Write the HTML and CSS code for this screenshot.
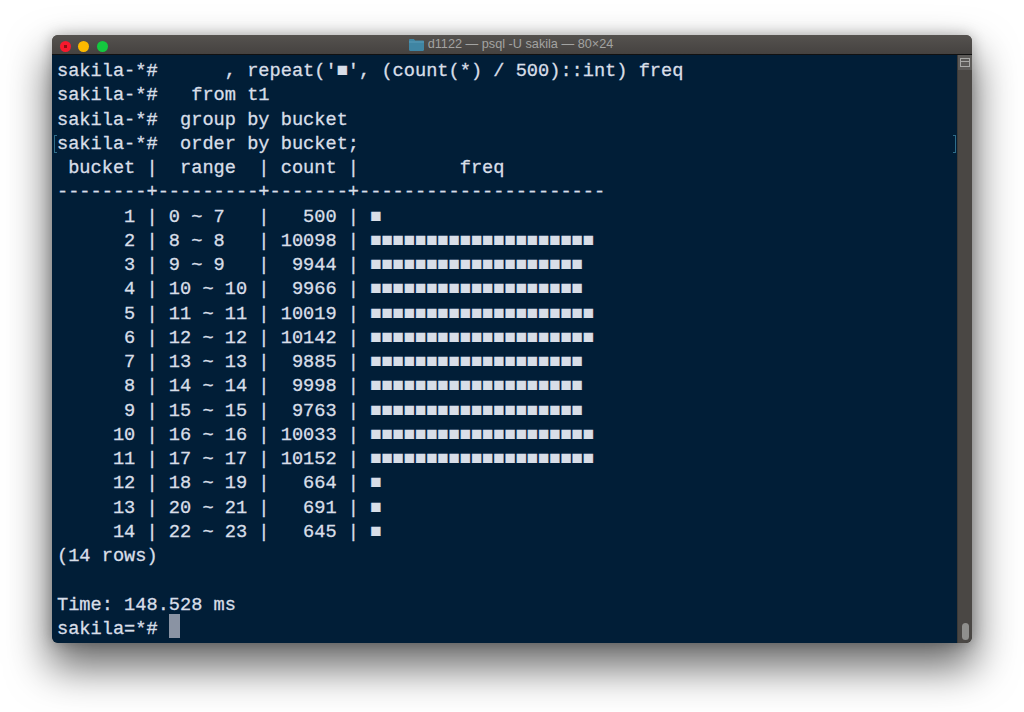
FILE: index.html
```html
<!DOCTYPE html>
<html lang="en">
<head>
<meta charset="utf-8">
<title>d1122 — psql -U sakila — 80×24</title>
<link rel="stylesheet" href="styles.css">
</head>
<body>
<main class="window">
  <header class="titlebar">
    <div class="lights">
      <span class="light red"></span>
      <span class="light yellow"></span>
      <span class="light green"></span>
    </div>
    <div class="title">
      <svg class="folder" viewBox="0 0 15 12" width="15" height="12" aria-hidden="true"><path d="M0 1.2C0 .5.5 0 1.2 0h3.6l1.4 1.4h7.6c.7 0 1.2.5 1.2 1.2v8.2c0 .7-.5 1.2-1.2 1.2H1.2C.5 12 0 11.500 0 10.800z" fill="#3f85a3"/><path d="M0 2.400h15v1H0z" fill="#5a9cb8"/></svg>
      <span>d1122 — psql -U sakila — 80×24</span>
    </div>
  </header>
  <div class="body">
    <div class="terminal">
<div class="line">sakila-*#      , repeat('■', (count(*) / 500)::int) freq</div>
<div class="line">sakila-*#   from t1</div>
<div class="line">sakila-*#  group by bucket</div>
<div class="line marked">sakila-*#  order by bucket;</div>
<div class="line"> bucket |  range  | count |         freq</div>
<div class="line">--------+---------+-------+----------------------</div>
<div class="line">      1 | 0 ~ 7   |   500 | ■</div>
<div class="line">      2 | 8 ~ 8   | 10098 | ■■■■■■■■■■■■■■■■■■■■</div>
<div class="line">      3 | 9 ~ 9   |  9944 | ■■■■■■■■■■■■■■■■■■■</div>
<div class="line">      4 | 10 ~ 10 |  9966 | ■■■■■■■■■■■■■■■■■■■</div>
<div class="line">      5 | 11 ~ 11 | 10019 | ■■■■■■■■■■■■■■■■■■■■</div>
<div class="line">      6 | 12 ~ 12 | 10142 | ■■■■■■■■■■■■■■■■■■■■</div>
<div class="line">      7 | 13 ~ 13 |  9885 | ■■■■■■■■■■■■■■■■■■■</div>
<div class="line">      8 | 14 ~ 14 |  9998 | ■■■■■■■■■■■■■■■■■■■</div>
<div class="line">      9 | 15 ~ 15 |  9763 | ■■■■■■■■■■■■■■■■■■■</div>
<div class="line">     10 | 16 ~ 16 | 10033 | ■■■■■■■■■■■■■■■■■■■■</div>
<div class="line">     11 | 17 ~ 17 | 10152 | ■■■■■■■■■■■■■■■■■■■■</div>
<div class="line">     12 | 18 ~ 19 |   664 | ■</div>
<div class="line">     13 | 20 ~ 21 |   691 | ■</div>
<div class="line">     14 | 22 ~ 23 |   645 | ■</div>
<div class="line">(14 rows)</div>
<div class="line"> </div>
<div class="line">Time: 148.528 ms</div>
<div class="line">sakila=*# <span class="cursor"> </span></div>
    </div>
    <aside class="scrollbar">
      <div class="split"><span class="split-icon"></span></div>
      <div class="thumb"></div>
    </aside>
  </div>
</main>
</body>
</html>
```
FILE: styles.css
```css
html, body {
  margin: 0;
  height: 712px;
  overflow: hidden;
  background: #fff;
}
body {
  padding: 35px 52px 0;
  box-sizing: border-box;
}
.window {
  height: 608px;
  border-radius: 6px;
  overflow: hidden;
  display: flex;
  flex-direction: column;
  background: #4a4744;
}
body::before {
  content: "";
  position: absolute;
  left: 52px;
  top: 35px;
  width: 920px;
  height: 608px;
  border-radius: 6px;
  box-shadow: 0 22px 42px 3px rgba(0, 0, 0, .58), 0 0 14px rgba(0, 0, 0, .25);
}
.titlebar {
  position: relative;
  z-index: 1;
  flex: 0 0 19px;
  display: flex;
  align-items: center;
  justify-content: center;
  background: linear-gradient(#55524f, #454240);
  border-bottom: 1px solid #111;
}
.lights {
  position: absolute;
  left: 7.500px;
  top: 5.500px;
  display: flex;
  gap: 7.500px;
}
.light {
  width: 11px;
  height: 11px;
  border-radius: 50%;
}
.red { background: radial-gradient(circle, #8c0f14 0 1.500px, #f7192d 2px); }
.yellow { background: #fcb900; }
.green { background: #14c83f; }
.title {
  display: flex;
  align-items: center;
  gap: 4px;
  margin-left: -2px;
  font: 12.700px/19px "Liberation Sans", Arial, sans-serif;
  color: #a3a3a1;
}
.body {
  flex: 1;
  display: flex;
  min-height: 0;
}
.terminal {
  flex: 1;
  position: relative;
  background: #011e37;
  padding: 4px 0 0 5px;
  font: 18.650px/24.250px "Liberation Mono", "DejaVu Sans Mono", monospace;
  color: #d8dee8;
  -webkit-text-stroke: .3px #d8dee8;
}
.line {
  height: 24.250px;
  white-space: pre;
}
.marked::before,
.marked::after {
  content: "";
  position: absolute;
  width: 2px;
  height: 16px;
  margin-top: 3px;
  border: 1px solid #2f6d8a;
}
.marked::before { left: 2px; border-right: 0; }
.marked::after { right: 1px; border-left: 0; }
.cursor {
  display: inline-block;
  width: 11px;
  height: 24px;
  margin-top: -3px;
  background: #8a93a3;
  vertical-align: top;
}
.scrollbar {
  flex: 0 0 15px;
  display: flex;
  flex-direction: column;
  justify-content: space-between;
  align-items: center;
  padding-bottom: 3px;
  box-sizing: border-box;
  background: #4a4744;
  border-left: 1px solid #3c3a38;
}
.split {
  align-self: stretch;
  height: 15px;
  background: #5c5a58;
  display: flex;
  align-items: center;
  justify-content: center;
}
.split-icon {
  width: 8px;
  height: 7px;
  border: 1px solid #a8a8a6;
  background: linear-gradient(#5c5a58 2px, #a8a8a6 2px 3px, #5c5a58 3px);
}
.thumb {
  width: 7px;
  height: 17px;
  border-radius: 4px;
  background: #8f8f8d;
}
```
